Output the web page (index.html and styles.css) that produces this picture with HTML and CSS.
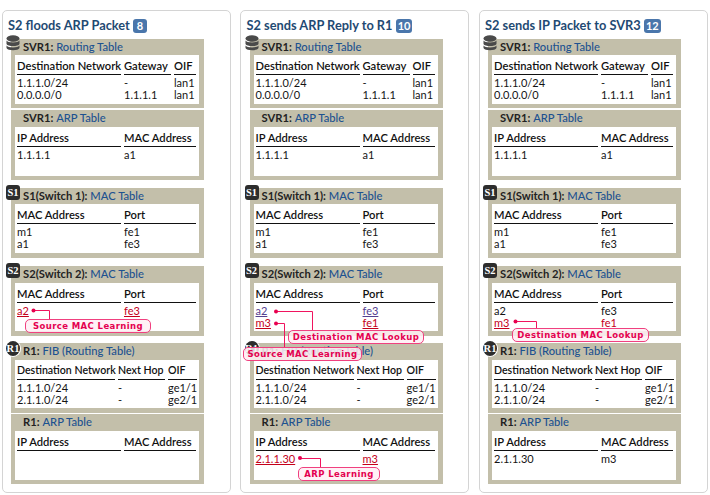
FILE: index.html
```html
<!DOCTYPE html>
<html lang="en">
<head>
<meta charset="utf-8">
<title>ARP walkthrough</title>
<link rel="stylesheet" href="styles.css">
</head>
<body>
<main class="board">
  <section class="card">
    <h2 class="card-title">S2 floods ARP Packet <span class="badge">8</span></h2>
    <div class="panel pa"><svg class="ico db" viewBox="0 0 14 16"><ellipse cx="7" cy="3.5" rx="6.5" ry="3.2"/><path d="M.5 5.5c1 2.6 12 2.6 13 0V9c-1 2.8-12 2.8-13 0zM.5 10.5c1 2.6 12 2.6 13 0V13c-1 3-12 3-13 0z"/></svg>
      <h3 class="ptitle"><b>SVR1:</b> <span>Routing Table</span></h3>
      <div class="box t-route"><b>Destination Network</b><b>Gateway</b><b>OIF</b><i>1.1.1.0/24</i><i>-</i><i>lan1</i><i>0.0.0.0/0</i><i>1.1.1.1</i><i>lan1</i></div></div>
    <div class="panel pb"><h3 class="ptitle"><b>SVR1:</b> <span>ARP Table</span></h3>
      <div class="box t-two"><b>IP Address</b><b>MAC Address</b><i>1.1.1.1</i><i>a1</i></div></div>
    <div class="panel pc"><span class="ico sq">S1</span>
      <h3 class="ptitle"><b>S1(Switch 1):</b> <span>MAC Table</span></h3>
      <div class="box t-two"><b>MAC Address</b><b>Port</b><i>m1</i><i>fe1</i><i>a1</i><i>fe3</i></div></div>
    <div class="panel pd"><span class="ico sq">S2</span>
      <h3 class="ptitle"><b>S2(Switch 2):</b> <span>MAC Table</span></h3>
      <div class="box t-two"><b>MAC Address</b><b>Port</b><i><u class="red">a2</u></i><i><u class="red">fe3</u></i></div></div>
    <div class="panel pe"><span class="ico rd">R1</span>
      <h3 class="ptitle"><b>R1:</b> <span>FIB (Routing Table)</span></h3>
      <div class="box t-fib"><b>Destination Network</b><b>Next Hop</b><b>OIF</b><i>1.1.1.0/24</i><i>-</i><i>ge1/1</i><i>2.1.1.0/24</i><i>-</i><i>ge2/1</i></div></div>
    <div class="panel pf"><h3 class="ptitle"><b>R1:</b> <span>ARP Table</span></h3>
      <div class="box t-two"><b>IP Address</b><b>MAC Address</b></div></div>
  </section>

  <section class="card">
    <h2 class="card-title">S2 sends ARP Reply to R1 <span class="badge">10</span></h2>
    <div class="panel pa"><svg class="ico db" viewBox="0 0 14 16"><ellipse cx="7" cy="3.5" rx="6.5" ry="3.2"/><path d="M.5 5.5c1 2.6 12 2.6 13 0V9c-1 2.8-12 2.8-13 0zM.5 10.5c1 2.6 12 2.6 13 0V13c-1 3-12 3-13 0z"/></svg>
      <h3 class="ptitle"><b>SVR1:</b> <span>Routing Table</span></h3>
      <div class="box t-route"><b>Destination Network</b><b>Gateway</b><b>OIF</b><i>1.1.1.0/24</i><i>-</i><i>lan1</i><i>0.0.0.0/0</i><i>1.1.1.1</i><i>lan1</i></div></div>
    <div class="panel pb"><h3 class="ptitle"><b>SVR1:</b> <span>ARP Table</span></h3>
      <div class="box t-two"><b>IP Address</b><b>MAC Address</b><i>1.1.1.1</i><i>a1</i></div></div>
    <div class="panel pc"><span class="ico sq">S1</span>
      <h3 class="ptitle"><b>S1(Switch 1):</b> <span>MAC Table</span></h3>
      <div class="box t-two"><b>MAC Address</b><b>Port</b><i>m1</i><i>fe1</i><i>a1</i><i>fe3</i></div></div>
    <div class="panel pd"><span class="ico sq">S2</span>
      <h3 class="ptitle"><b>S2(Switch 2):</b> <span>MAC Table</span></h3>
      <div class="box t-two"><b>MAC Address</b><b>Port</b><i><u class="purple">a2</u></i><i><u class="purple">fe3</u></i><i><u class="red">m3</u></i><i><u class="red">fe1</u></i></div></div>
    <div class="panel pe"><span class="ico rd">R1</span>
      <h3 class="ptitle"><b>R1:</b> <span>FIB (Routing Table)</span></h3>
      <div class="box t-fib"><b>Destination Network</b><b>Next Hop</b><b>OIF</b><i>1.1.1.0/24</i><i>-</i><i>ge1/1</i><i>2.1.1.0/24</i><i>-</i><i>ge2/1</i></div></div>
    <div class="panel pf"><h3 class="ptitle"><b>R1:</b> <span>ARP Table</span></h3>
      <div class="box t-two"><b>IP Address</b><b>MAC Address</b><i><u class="red">2.1.1.30</u></i><i><u class="red">m3</u></i></div></div>
  </section>

  <section class="card">
    <h2 class="card-title">S2 sends IP Packet to SVR3 <span class="badge">12</span></h2>
    <div class="panel pa"><svg class="ico db" viewBox="0 0 14 16"><ellipse cx="7" cy="3.5" rx="6.5" ry="3.2"/><path d="M.5 5.5c1 2.6 12 2.6 13 0V9c-1 2.8-12 2.8-13 0zM.5 10.5c1 2.6 12 2.6 13 0V13c-1 3-12 3-13 0z"/></svg>
      <h3 class="ptitle"><b>SVR1:</b> <span>Routing Table</span></h3>
      <div class="box t-route"><b>Destination Network</b><b>Gateway</b><b>OIF</b><i>1.1.1.0/24</i><i>-</i><i>lan1</i><i>0.0.0.0/0</i><i>1.1.1.1</i><i>lan1</i></div></div>
    <div class="panel pb"><h3 class="ptitle"><b>SVR1:</b> <span>ARP Table</span></h3>
      <div class="box t-two"><b>IP Address</b><b>MAC Address</b><i>1.1.1.1</i><i>a1</i></div></div>
    <div class="panel pc"><span class="ico sq">S1</span>
      <h3 class="ptitle"><b>S1(Switch 1):</b> <span>MAC Table</span></h3>
      <div class="box t-two"><b>MAC Address</b><b>Port</b><i>m1</i><i>fe1</i><i>a1</i><i>fe3</i></div></div>
    <div class="panel pd"><span class="ico sq">S2</span>
      <h3 class="ptitle"><b>S2(Switch 2):</b> <span>MAC Table</span></h3>
      <div class="box t-two"><b>MAC Address</b><b>Port</b><i>a2</i><i>fe3</i><i><u class="red">m3</u></i><i class="red">fe1</i></div></div>
    <div class="panel pe"><span class="ico rd">R1</span>
      <h3 class="ptitle"><b>R1:</b> <span>FIB (Routing Table)</span></h3>
      <div class="box t-fib"><b>Destination Network</b><b>Next Hop</b><b>OIF</b><i>1.1.1.0/24</i><i>-</i><i>ge1/1</i><i>2.1.1.0/24</i><i>-</i><i>ge2/1</i></div></div>
    <div class="panel pf"><h3 class="ptitle"><b>R1:</b> <span>ARP Table</span></h3>
      <div class="box t-two"><b>IP Address</b><b>MAC Address</b><i>2.1.1.30</i><i>m3</i></div></div>
  </section>
</main>

<svg class="wires" viewBox="0 0 710 495">
  <g class="wire">
    <path d="M33 310.5H49.5V320"/>
    <path d="M276 311.5H312.5V330"/>
    <path d="M276 323.5H284.5V347"/>
    <path d="M300 458.5H320.5V467"/>
    <path d="M515 321.5H536.5V328"/>
  </g>
  <g class="dots">
    <circle cx="33.5" cy="310.5" r="2"/>
    <circle cx="276" cy="311.5" r="2"/>
    <circle cx="276" cy="323.5" r="2"/>
    <circle cx="300" cy="458" r="2"/>
    <circle cx="515.5" cy="321.5" r="2"/>
  </g>
</svg>
<div class="pill p1">Source MAC Learning</div>
<div class="pill p2">Destination MAC Lookup</div>
<div class="pill p3">Source MAC Learning</div>
<div class="pill p4">ARP Learning</div>
<div class="pill p5">Destination MAC Lookup</div>
</body>
</html>
```
FILE: styles.css
```css
* { box-sizing: border-box; }
html, body { margin: 0; padding: 0; background: #fff; }
body {
  position: relative;
  width: 710px;
  height: 495px;
  overflow: hidden;
  font-family: "Lato", "Liberation Sans", sans-serif;
  color: #141414;
}
.board {
  display: flex;
  gap: 9.5px;
  padding: 10px 0 0 1.5px;
}
.card {
  flex: none;
  width: 229px;
  height: 483px;
  border: 1px solid #d4d4d4;
  border-radius: 5px;
  padding: 0 0 0 8.5px;
}
.card-title {
  margin: 0 0 0 -3px;
  height: 28px;
  padding: 5px 0 0 0;
  font-size: 12.8px;
  line-height: 18px;
  font-weight: 700;
  color: #1f4a73;
  white-space: nowrap;
}
.badge {
  display: inline-block;
  min-width: 14px;
  height: 14px;
  padding: 0 2px;
  border-radius: 3px;
  background: #4a76ab;
  color: #fff;
  font-size: 11px;
  line-height: 14px;
  text-align: center;
  vertical-align: 0;
}
.panel {
  position: relative;
  width: 193px;
  height: 70px;
  padding: 0 5px 0 4px;
  background: #c3bfaa;
}
.pa { height: 69px; }
.pb { margin-top: 2px; }
.pc { margin-top: 8px; }
.pd { margin-top: 8px; }
.pe { margin-top: 7px; }
.pf { margin-top: 1px; }
.ptitle {
  margin: 0;
  height: 17px;
  padding-left: 8px;
  font-size: 11.2px;
  line-height: 16px;
  font-weight: 400;
  white-space: nowrap;
}
.pa .ptitle, .pc .ptitle { height: 16px; }
.ptitle b { font-weight: 700; color: #222; }
.ptitle span { color: #1d5290; font-weight: 500; }
.box {
  display: grid;
  column-gap: 3px;
  align-content: start;
  height: 49px;
  padding: 2px 2px 0 2px;
  background: #fff;
  font-size: 11px;
}
.pd .box, .pe .box { height: 48px; }
.box b, .box i {
  font-style: normal;
  white-space: nowrap;
}
.box b {
  height: 18px;
  margin-bottom: 2px;
  border-bottom: 1px solid #111;
  font-size: 11.2px;
  font-weight: 600;
  line-height: 17px;
  color: #111;
}
.t-fib b { font-size: 10.6px; }
.box i { height: 12px; line-height: 12px; }
.t-route { grid-template-columns: 104px 47px 22px; }
.t-two { grid-template-columns: 104px 72px; }
.t-fib { grid-template-columns: 98px 47px 29px; }
.box u { text-decoration-thickness: 1px; text-underline-offset: 1px; }
.red { color: #c4001a; }
.purple { color: #54408f; }
.ico {
  position: absolute;
  left: -5px;
  top: -3px;
  width: 14px;
  height: 15px;
}
.db { top: -4px; height: 16px; fill: #4a4a4a; }
.sq, .rd {
  background: #2d2d2d;
  color: #fff;
  font-family: "Liberation Serif", serif;
  font-size: 10.5px;
  font-weight: 700;
  line-height: 15px;
  text-align: center;
}
.sq { border-radius: 3px; }
.rd { top: -2px; border-radius: 50%; box-shadow: 0 0 0 1px #fff; }
.wires {
  position: absolute;
  left: 0;
  top: 0;
  width: 710px;
  height: 495px;
  pointer-events: none;
}
.wire path { fill: none; stroke: #f0145f; stroke-width: 1; }
.dots circle { fill: #e8004f; }
.pill {
  position: absolute;
  height: 14px;
  border: 1px solid #f0407f;
  border-radius: 5px;
  background: rgba(255, 238, 244, .85);
  color: #e4004f;
  font-family: "DejaVu Sans", sans-serif;
  font-size: 8.5px;
  font-weight: 700;
  letter-spacing: .4px;
  line-height: 12px;
  text-align: center;
  white-space: nowrap;
}
.p1 { left: 25px; top: 319px; width: 126px; }
.p2 { left: 288px; top: 330px; width: 136px; }
.p3 { left: 243px; top: 347px; width: 119px; }
.p4 { left: 298px; top: 467px; width: 82px; }
.p5 { left: 512px; top: 328px; width: 137px; }
```
